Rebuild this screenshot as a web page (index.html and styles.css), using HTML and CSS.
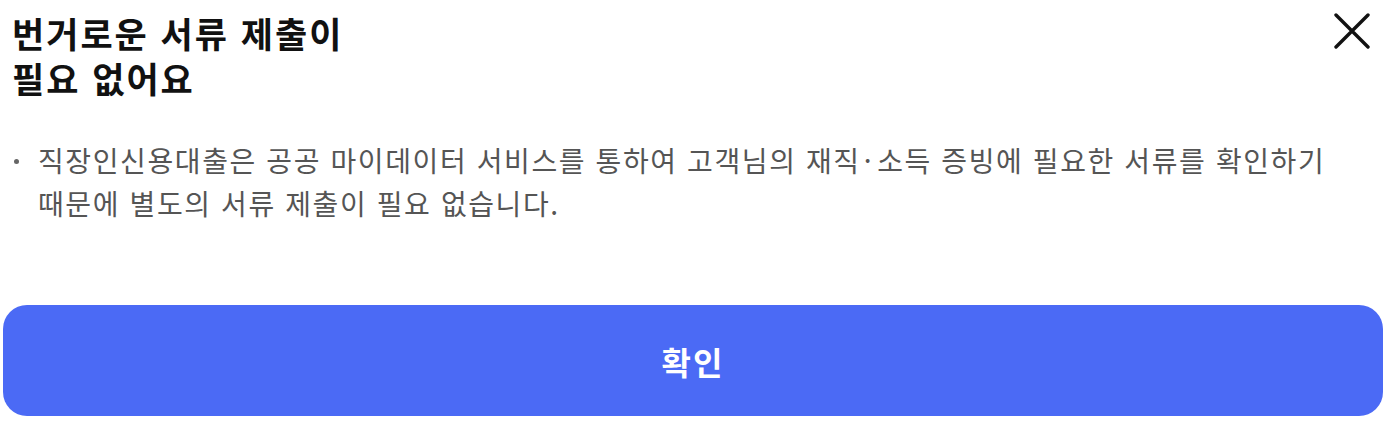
FILE: index.html
```html
<!DOCTYPE html>
<html lang="ko">
<head>
<meta charset="utf-8">
<link rel="stylesheet" href="styles.css">
</head>
<body>
<div class="sheet">
  <div class="header">
    <h1 class="title">번거로운 서류 제출이<br>필요 없어요</h1>
    <button class="close" aria-label="닫기">
      <svg width="36" height="36" viewBox="0 0 36 36"><path d="M2 2L34 34M34 2L2 34" stroke="#111" stroke-width="3.4" stroke-linecap="round" fill="none"/></svg>
    </button>
  </div>
  <ul class="notes">
    <li>직장인신용대출은 공공 마이데이터 서비스를 통하여 고객님의 재직<span class="dot">·</span>소득 증빙에 필요한 서류를 확인하기 때문에 별도의 서류 제출이 필요 없습니다.</li>
  </ul>
  <button class="confirm">확인</button>
</div>
</body>
</html>
```

FILE: styles.css
```css
* { box-sizing: border-box; }
html, body { margin: 0; padding: 0; background: #fff; }
body { font-family: "Noto Sans CJK KR", "Noto Sans", sans-serif; }
.sheet { width: 1396px; height: 430px; padding: 0 13px 0 3px; display: flex; flex-direction: column; }
.header { display: flex; justify-content: space-between; align-items: flex-start; padding: 10px 0 0 9px; }
.title { margin: 0; font-size: 35px; font-weight: 700; line-height: 45px; color: #111; letter-spacing: 2px; }
.close { border: 0; background: none; padding: 0; margin: 3px 13px 0 0; width: 36px; height: 36px; display: flex; }
.notes { list-style: none; margin: 39px 0 0; padding: 0 0 0 11px; }
.notes li { position: relative; padding-left: 24px; font-size: 28px; line-height: 43px; letter-spacing: 1.6px; color: #555; width: 1340px; word-break: keep-all; }
.notes li::before { content: ""; position: absolute; left: 0; top: 20px; width: 5px; height: 5px; border-radius: 50%; background: #666; }
.dot { margin: 0 4px 0 3px; }
.confirm { margin-top: auto; margin-bottom: 14px; height: 111px; width: 100%; border: 0; border-radius: 24px; background: #4b6af5; color: #fff; font-family: inherit; font-size: 32px; font-weight: 700; letter-spacing: 2px; }
```
